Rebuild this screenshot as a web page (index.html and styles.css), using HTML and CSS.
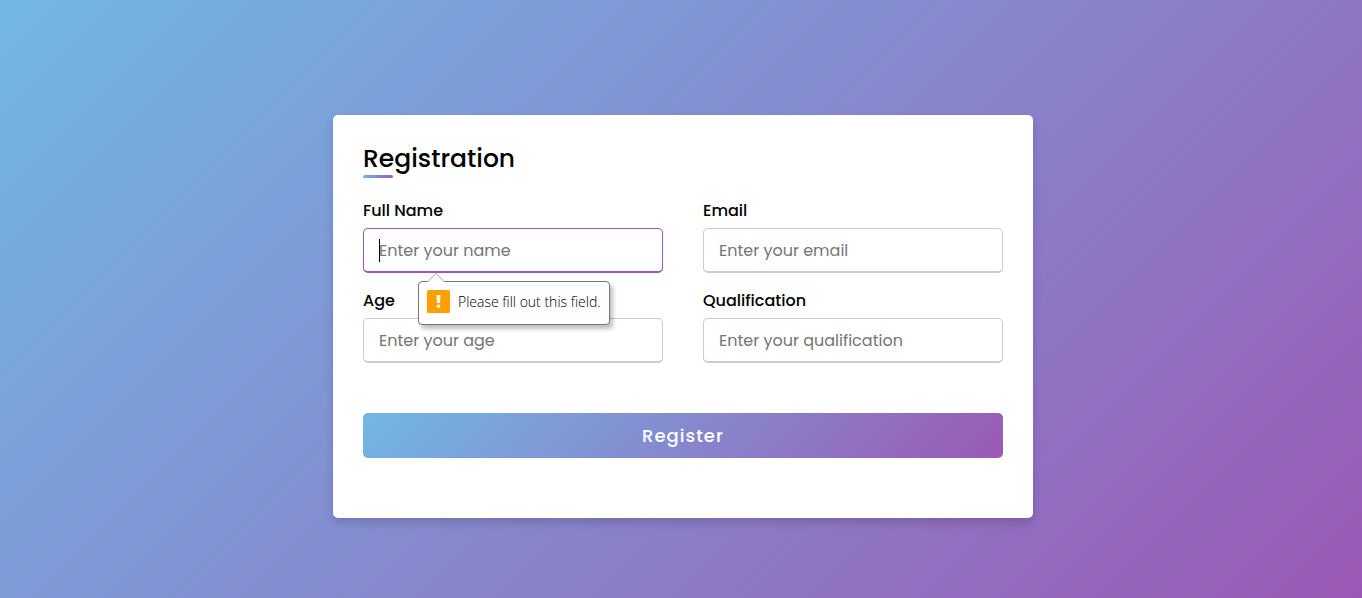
FILE: index.html
```html
<!DOCTYPE html>
<html lang="en">
<head>
  <meta charset="UTF-8">
  <meta name="viewport" content="width=device-width, initial-scale=1">
  <title>Registration</title>
  <link rel="stylesheet" href="styles.css">
</head>
<body>
  <main class="container">
    <h1 class="title">Registration</h1>
    <form class="form" novalidate>
      <div class="user-details">
        <div class="input-box">
          <label class="details" for="name">Full Name</label>
          <div class="control">
            <input class="field field-active" id="name" type="text" placeholder="Enter your name" required>
            <span class="caret"></span>
            <div class="tooltip" role="alert">
              <svg class="tooltip-arrow" viewBox="0 0 18 9" width="18" height="9" aria-hidden="true">
                <path d="M0 9 L1 8.500 L9 0.500 L17 8.500 L18 9 Z" fill="#fff"/>
                <path d="M1 8.500 L9 0.500 L17 8.500" fill="none" stroke="#a0a0a0"/>
              </svg>
              <svg class="tooltip-icon" viewBox="0 0 23 23" width="23" height="23" aria-hidden="true">
                <rect width="23" height="23" rx="1.500" fill="#ffa000"/>
                <path d="M9.500 5h4l-.5 8h-3z" fill="#fff"/>
                <circle cx="11.500" cy="16.300" r="1.800" fill="#fff"/>
              </svg>
              <span>Please fill out this field.</span>
            </div>
          </div>
        </div>
        <div class="input-box">
          <label class="details" for="email">Email</label>
          <input class="field" id="email" type="text" placeholder="Enter your email" required>
        </div>
        <div class="input-box">
          <label class="details" for="age">Age</label>
          <input class="field" id="age" type="text" placeholder="Enter your age" required>
        </div>
        <div class="input-box">
          <label class="details" for="qualification">Qualification</label>
          <input class="field" id="qualification" type="text" placeholder="Enter your qualification" required>
        </div>
      </div>
      <button class="register" type="submit">Register</button>
    </form>
  </main>
</body>
</html>
```

FILE: styles.css
```css
* {
  box-sizing: border-box;
  margin: 0;
  padding: 0;
  font-family: Poppins, Inter, "Open Sans", sans-serif;
}

body {
  display: flex;
  justify-content: center;
  align-items: center;
  min-height: 100vh;
  padding: 45px 10px 10px 14px;
  background: linear-gradient(135deg, #71b7e6, #9b59b6);
}

.container {
  width: 100%;
  max-width: 700px;
  padding: 25px 30px 60px;
  border-radius: 5px;
  background: #fff;
  box-shadow: 0 5px 10px rgba(0, 0, 0, 0.15);
}

.title {
  font-size: 25px;
  font-weight: 500;
  line-height: 38px;
}

.title::after {
  content: "";
  display: block;
  width: 30px;
  height: 3px;
  margin-top: -3px;
  border-radius: 5px;
  background: linear-gradient(135deg, #71b7e6, #9b59b6);
}

.user-details {
  display: grid;
  grid-template-columns: 1fr 1fr;
  gap: 15px 40px;
  margin: 20px 0 50px;
}

.input-box {
  display: flex;
  flex-direction: column;
  gap: 4px;
}

.details {
  font-size: 16px;
  font-weight: 500;
  line-height: 26px;
}

.control {
  position: relative;
}

.field {
  display: block;
  width: 100%;
  height: 45px;
  padding-left: 15px;
  border: 1px solid #ccc;
  border-bottom-width: 2px;
  border-radius: 5px;
  outline: none;
  background: #fff;
  font-size: 16px;
}

.field::placeholder {
  color: #757575;
}

.field:focus,
.field-active {
  border-color: #9b59b6;
}

.caret {
  position: absolute;
  top: 11px;
  left: 16px;
  width: 1px;
  height: 23px;
  background: #000;
}

.tooltip {
  position: absolute;
  z-index: 1;
  top: 53px;
  left: 55px;
  display: flex;
  align-items: center;
  gap: 8px;
  height: 44px;
  padding: 0 8px 3px;
  border: 1px solid #777;
  border-radius: 4px;
  background: #fff;
  box-shadow: 3px 4px 4px rgba(0, 0, 0, 0.25);
  white-space: nowrap;
}

.tooltip span {
  font-family: "Segoe UI", "Open Sans", sans-serif;
  font-size: 14px;
  font-weight: 300;
  line-height: 20px;
}

.tooltip-arrow {
  position: absolute;
  top: -9px;
  left: 8px;
}

.register {
  display: block;
  width: 100%;
  height: 45px;
  border: none;
  border-radius: 5px;
  background: linear-gradient(135deg, #71b7e6, #9b59b6);
  color: #fff;
  font-size: 18px;
  font-weight: 500;
  letter-spacing: 1px;
  cursor: pointer;
}
```
